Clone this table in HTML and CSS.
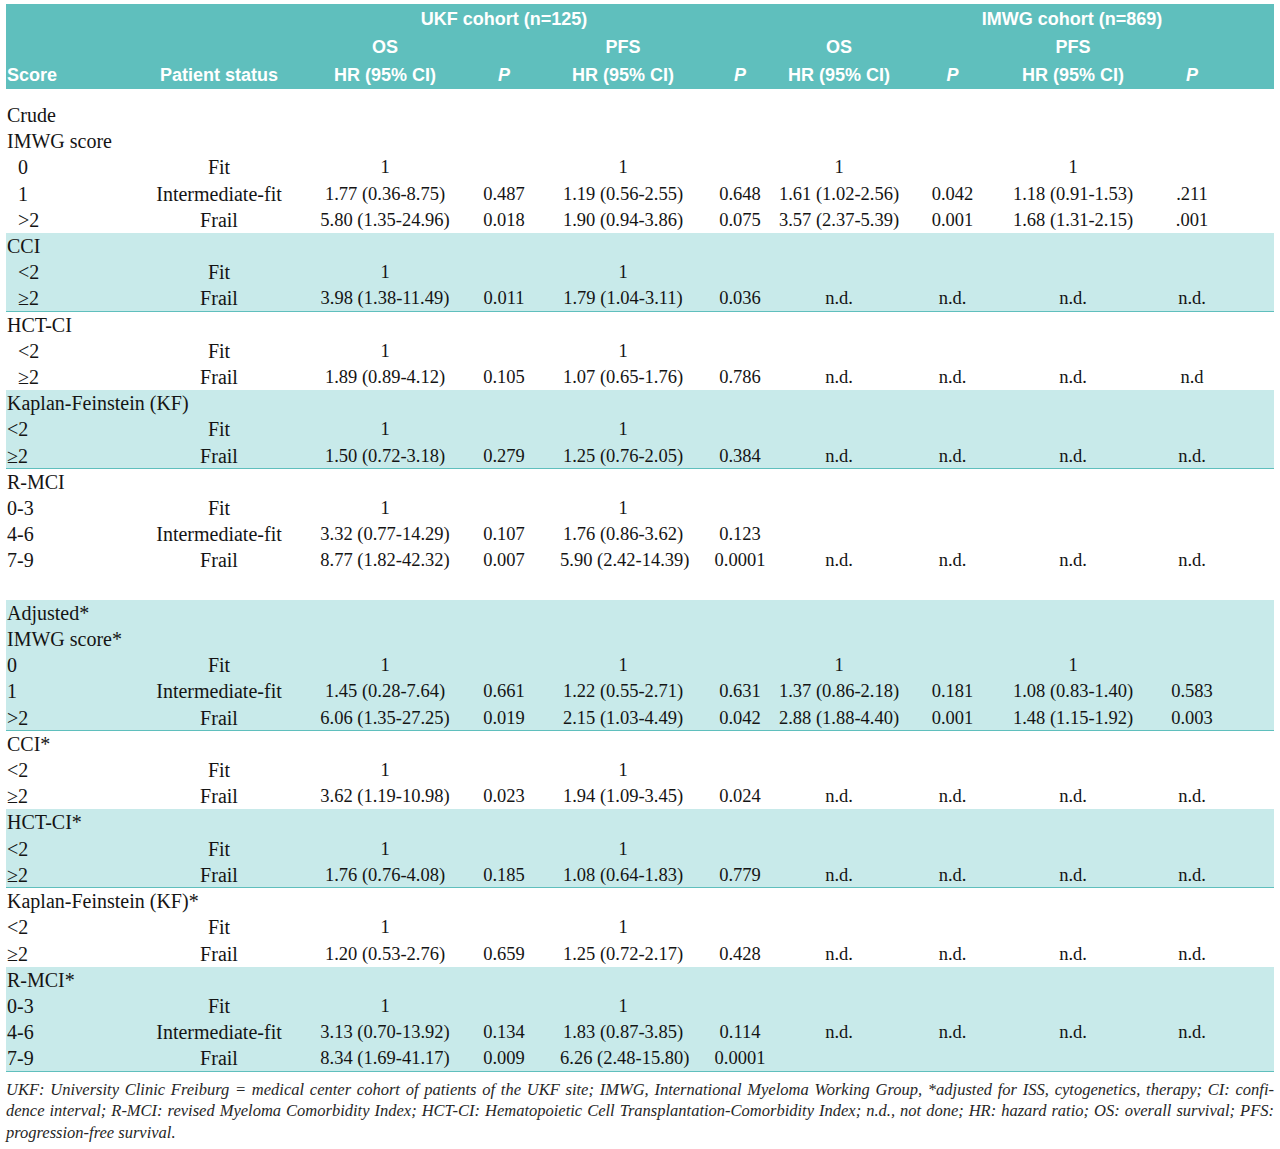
FILE: index.html
```html
<!DOCTYPE html>
<html lang="en">
<head>
<meta charset="utf-8">
<title>Frailty scores hazard ratios</title>
<link rel="stylesheet" href="styles.css">
</head>
<body>
<div class="page">
<table class="tbl">
<colgroup>
<col class="c-score"><col class="c-status"><col class="c-hr1"><col class="c-p1"><col class="c-hr2"><col class="c-p2"><col class="c-hr3"><col class="c-p3"><col class="c-hr4"><col class="c-p4">
</colgroup>
<thead>
<tr class="h h1">
<th class="l"></th><th class="st"></th><th class="ukf" colspan="3">UKF cohort (n=125)</th><th class="p2"></th><th class="hr3"></th><th class="imwg" colspan="3">IMWG cohort (n=869)</th>
</tr>
<tr class="h">
<th class="l"></th><th class="st"></th><th class="hr1">OS</th><th class="p1"></th><th class="hr2">PFS</th><th class="p2"></th><th class="hr3">OS</th><th class="p3"></th><th class="hr4">PFS</th><th class="p4"></th>
</tr>
<tr class="h h3">
<th class="l">Score</th><th class="st">Patient status</th><th class="hr1">HR (95% CI)</th><th class="p1"><i>P</i></th><th class="hr2">HR (95% CI)</th><th class="p2"><i>P</i></th><th class="hr3">HR (95% CI)</th><th class="p3"><i>P</i></th><th class="hr4">HR (95% CI)</th><th class="p4"><i>P</i></th>
</tr>
</thead>
<tbody class="spacer"><tr><td colspan="10"></td></tr></tbody>

<tbody>
<tr><td class="l">Crude</td><td colspan="9"></td></tr>
<tr><td class="l">IMWG score</td><td colspan="9"></td></tr>
<tr><td class="l in">0</td><td class="st">Fit</td><td class="hr1">1</td><td class="p1"></td><td class="hr2">1</td><td class="p2"></td><td class="hr3">1</td><td class="p3"></td><td class="hr4">1</td><td class="p4"></td></tr>
<tr><td class="l in">1</td><td class="st">Intermediate-fit</td><td class="hr1">1.77 (0.36-8.75)</td><td class="p1">0.487</td><td class="hr2">1.19 (0.56-2.55)</td><td class="p2">0.648</td><td class="hr3">1.61 (1.02-2.56)</td><td class="p3">0.042</td><td class="hr4">1.18 (0.91-1.53)</td><td class="p4">.211</td></tr>
<tr><td class="l in">&gt;2</td><td class="st">Frail</td><td class="hr1">5.80 (1.35-24.96)</td><td class="p1">0.018</td><td class="hr2">1.90 (0.94-3.86)</td><td class="p2">0.075</td><td class="hr3">3.57 (2.37-5.39)</td><td class="p3">0.001</td><td class="hr4">1.68 (1.31-2.15)</td><td class="p4">.001</td></tr>
</tbody>

<tbody class="band">
<tr><td class="l">CCI</td><td colspan="9"></td></tr>
<tr><td class="l in">&lt;2</td><td class="st">Fit</td><td class="hr1">1</td><td class="p1"></td><td class="hr2">1</td><td class="p2"></td><td class="hr3"></td><td class="p3"></td><td class="hr4"></td><td class="p4"></td></tr>
<tr><td class="l in">&ge;2</td><td class="st">Frail</td><td class="hr1">3.98 (1.38-11.49)</td><td class="p1">0.011</td><td class="hr2">1.79 (1.04-3.11)</td><td class="p2">0.036</td><td class="hr3">n.d.</td><td class="p3">n.d.</td><td class="hr4">n.d.</td><td class="p4">n.d.</td></tr>
</tbody>

<tbody>
<tr><td class="l">HCT-CI</td><td colspan="9"></td></tr>
<tr><td class="l in">&lt;2</td><td class="st">Fit</td><td class="hr1">1</td><td class="p1"></td><td class="hr2">1</td><td class="p2"></td><td class="hr3"></td><td class="p3"></td><td class="hr4"></td><td class="p4"></td></tr>
<tr><td class="l in">&ge;2</td><td class="st">Frail</td><td class="hr1">1.89 (0.89-4.12)</td><td class="p1">0.105</td><td class="hr2">1.07 (0.65-1.76)</td><td class="p2">0.786</td><td class="hr3">n.d.</td><td class="p3">n.d.</td><td class="hr4">n.d.</td><td class="p4">n.d</td></tr>
</tbody>

<tbody class="band">
<tr><td class="l">Kaplan-Feinstein (KF)</td><td colspan="9"></td></tr>
<tr><td class="l">&lt;2</td><td class="st">Fit</td><td class="hr1">1</td><td class="p1"></td><td class="hr2">1</td><td class="p2"></td><td class="hr3"></td><td class="p3"></td><td class="hr4"></td><td class="p4"></td></tr>
<tr><td class="l">&ge;2</td><td class="st">Frail</td><td class="hr1">1.50 (0.72-3.18)</td><td class="p1">0.279</td><td class="hr2">1.25 (0.76-2.05)</td><td class="p2">0.384</td><td class="hr3">n.d.</td><td class="p3">n.d.</td><td class="hr4">n.d.</td><td class="p4">n.d.</td></tr>
</tbody>

<tbody>
<tr><td class="l">R-MCI</td><td colspan="9"></td></tr>
<tr><td class="l">0-3</td><td class="st">Fit</td><td class="hr1">1</td><td class="p1"></td><td class="hr2">1</td><td class="p2"></td><td class="hr3"></td><td class="p3"></td><td class="hr4"></td><td class="p4"></td></tr>
<tr><td class="l">4-6</td><td class="st">Intermediate-fit</td><td class="hr1">3.32 (0.77-14.29)</td><td class="p1">0.107</td><td class="hr2">1.76 (0.86-3.62)</td><td class="p2">0.123</td><td class="hr3"></td><td class="p3"></td><td class="hr4"></td><td class="p4"></td></tr>
<tr><td class="l">7-9</td><td class="st">Frail</td><td class="hr1">8.77 (1.82-42.32)</td><td class="p1">0.007</td><td class="hr2">5.90 (2.42-14.39)</td><td class="p2">0.0001</td><td class="hr3">n.d.</td><td class="p3">n.d.</td><td class="hr4">n.d.</td><td class="p4">n.d.</td></tr>
<tr><td colspan="10">&nbsp;</td></tr>
</tbody>

<tbody class="band">
<tr><td class="l">Adjusted*</td><td colspan="9"></td></tr>
<tr><td class="l">IMWG score*</td><td colspan="9"></td></tr>
<tr><td class="l">0</td><td class="st">Fit</td><td class="hr1">1</td><td class="p1"></td><td class="hr2">1</td><td class="p2"></td><td class="hr3">1</td><td class="p3"></td><td class="hr4">1</td><td class="p4"></td></tr>
<tr><td class="l">1</td><td class="st">Intermediate-fit</td><td class="hr1">1.45 (0.28-7.64)</td><td class="p1">0.661</td><td class="hr2">1.22 (0.55-2.71)</td><td class="p2">0.631</td><td class="hr3">1.37 (0.86-2.18)</td><td class="p3">0.181</td><td class="hr4">1.08 (0.83-1.40)</td><td class="p4">0.583</td></tr>
<tr><td class="l">&gt;2</td><td class="st">Frail</td><td class="hr1">6.06 (1.35-27.25)</td><td class="p1">0.019</td><td class="hr2">2.15 (1.03-4.49)</td><td class="p2">0.042</td><td class="hr3">2.88 (1.88-4.40)</td><td class="p3">0.001</td><td class="hr4">1.48 (1.15-1.92)</td><td class="p4">0.003</td></tr>
</tbody>

<tbody>
<tr><td class="l">CCI*</td><td colspan="9"></td></tr>
<tr><td class="l">&lt;2</td><td class="st">Fit</td><td class="hr1">1</td><td class="p1"></td><td class="hr2">1</td><td class="p2"></td><td class="hr3"></td><td class="p3"></td><td class="hr4"></td><td class="p4"></td></tr>
<tr><td class="l">&ge;2</td><td class="st">Frail</td><td class="hr1">3.62 (1.19-10.98)</td><td class="p1">0.023</td><td class="hr2">1.94 (1.09-3.45)</td><td class="p2">0.024</td><td class="hr3">n.d.</td><td class="p3">n.d.</td><td class="hr4">n.d.</td><td class="p4">n.d.</td></tr>
</tbody>

<tbody class="band">
<tr><td class="l">HCT-CI*</td><td colspan="9"></td></tr>
<tr><td class="l">&lt;2</td><td class="st">Fit</td><td class="hr1">1</td><td class="p1"></td><td class="hr2">1</td><td class="p2"></td><td class="hr3"></td><td class="p3"></td><td class="hr4"></td><td class="p4"></td></tr>
<tr><td class="l">&ge;2</td><td class="st">Frail</td><td class="hr1">1.76 (0.76-4.08)</td><td class="p1">0.185</td><td class="hr2">1.08 (0.64-1.83)</td><td class="p2">0.779</td><td class="hr3">n.d.</td><td class="p3">n.d.</td><td class="hr4">n.d.</td><td class="p4">n.d.</td></tr>
</tbody>

<tbody>
<tr><td class="l">Kaplan-Feinstein (KF)*</td><td colspan="9"></td></tr>
<tr><td class="l">&lt;2</td><td class="st">Fit</td><td class="hr1">1</td><td class="p1"></td><td class="hr2">1</td><td class="p2"></td><td class="hr3"></td><td class="p3"></td><td class="hr4"></td><td class="p4"></td></tr>
<tr><td class="l">&ge;2</td><td class="st">Frail</td><td class="hr1">1.20 (0.53-2.76)</td><td class="p1">0.659</td><td class="hr2">1.25 (0.72-2.17)</td><td class="p2">0.428</td><td class="hr3">n.d.</td><td class="p3">n.d.</td><td class="hr4">n.d.</td><td class="p4">n.d.</td></tr>
</tbody>

<tbody class="band">
<tr><td class="l">R-MCI*</td><td colspan="9"></td></tr>
<tr><td class="l">0-3</td><td class="st">Fit</td><td class="hr1">1</td><td class="p1"></td><td class="hr2">1</td><td class="p2"></td><td class="hr3"></td><td class="p3"></td><td class="hr4"></td><td class="p4"></td></tr>
<tr><td class="l">4-6</td><td class="st">Intermediate-fit</td><td class="hr1">3.13 (0.70-13.92)</td><td class="p1">0.134</td><td class="hr2">1.83 (0.87-3.85)</td><td class="p2">0.114</td><td class="hr3">n.d.</td><td class="p3">n.d.</td><td class="hr4">n.d.</td><td class="p4">n.d.</td></tr>
<tr><td class="l">7-9</td><td class="st">Frail</td><td class="hr1">8.34 (1.69-41.17)</td><td class="p1">0.009</td><td class="hr2">6.26 (2.48-15.80)</td><td class="p2">0.0001</td><td class="hr3"></td><td class="p3"></td><td class="hr4"></td><td class="p4"></td></tr>
</tbody>
</table>

<p class="note">
<span class="ln">UKF: University Clinic Freiburg = medical center cohort of patients of the UKF site; IMWG, International Myeloma Working Group, *adjusted for ISS, cytogenetics, therapy; CI: confi-</span>
<span class="ln">dence interval; R-MCI: revised Myeloma Comorbidity Index; HCT-CI: Hematopoietic Cell Transplantation-Comorbidity Index; n.d., not done; HR: hazard ratio; OS: overall survival; PFS:</span>
<span class="last">progression-free survival.</span>
</p>
</div>
</body>
</html>
```

FILE: styles.css
```css
html, body {
  margin: 0;
  padding: 0;
  background: #ffffff;
}

.page {
  padding: 4px 6px 0 6px;
  width: 1268px;
}

.tbl {
  width: 1268px;
  table-layout: fixed;
  border-collapse: collapse;
  border-spacing: 0;
  font-family: "Liberation Serif", "Times New Roman", serif;
  font-size: 20px;
  color: #141414;
}

.c-score { width: 134px; }
.c-status { width: 162px; }
.c-hr1 { width: 153px; }
.c-p1 { width: 105px; }
.c-hr2 { width: 130px; }
.c-p2 { width: 85px; }
.c-hr3 { width: 125px; }
.c-p3 { width: 105px; }
.c-hr4 { width: 130px; }
.c-p4 { width: 139px; }

.tbl th,
.tbl td {
  padding: 0;
  white-space: nowrap;
  text-align: center;
  vertical-align: middle;
}

/* header */
.tbl thead tr {
  background: #5fbfbd;
}
.tbl th {
  height: 28px;
  line-height: 28px;
  color: #ffffff;
  font-family: "Liberation Sans", Arial, sans-serif;
  font-weight: bold;
  font-size: 18px;
}
.tbl thead .h1 th { height: 29px; }
.tbl th i { font-style: italic; }
.tbl th.ukf { padding-left: 16px; }
.tbl th.imwg { padding-right: 30px; }

/* body */
.tbl td {
  height: 26.2px;
  line-height: 26.2px;
}

.tbl .spacer td {
  height: 13px;
  line-height: 0;
}

.l {
  text-align: left !important;
  padding-left: 1px !important;
  overflow: visible;
}
.l.in { padding-left: 12px !important; }

.st { padding-right: 4px !important; }
.hr1 { padding-left: 13px !important; }
.p1 { padding-right: 7px !important; }
.hr2 { padding-right: 4px !important; }
.p2 { padding-left: 15px !important; }
.hr3 { padding-left: 3px !important; }
.hr4 { padding-left: 6px !important; }
.p4 { padding-right: 25px !important; }

td.hr1, td.p1, td.hr2, td.p2, td.hr3, td.p3, td.hr4, td.p4 {
  font-size: 18.5px;
}

.band tr {
  background: #c8eaea;
}
.band tr:last-child td {
  box-shadow: inset 0 -1px 0 #5fbfbd;
}

/* footnote */
.note {
  margin: 7px 0 0 0;
  font-family: "Liberation Serif", "Times New Roman", serif;
  font-style: italic;
  font-size: 16.5px;
  line-height: 21.5px;
  color: #262626;
}
.note .ln {
  display: block;
  text-align: justify;
  text-align-last: justify;
}
.note .last {
  display: block;
}
```
